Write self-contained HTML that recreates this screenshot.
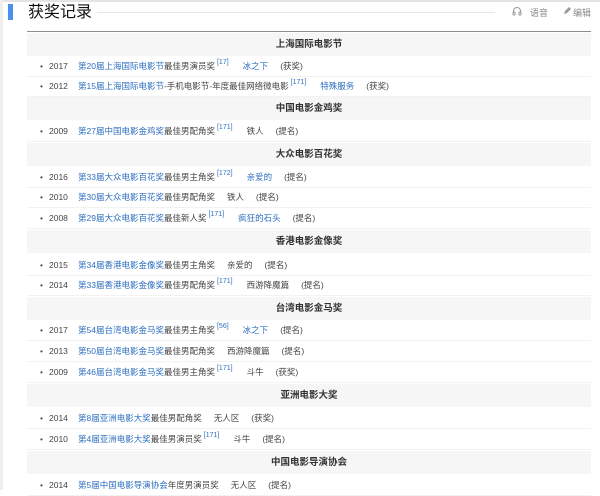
<!DOCTYPE html><html><head><meta charset="utf-8"><style>
body{margin:0;width:600px;height:490px;overflow:hidden;background:#fff;font-family:"Liberation Sans","Noto Sans CJK SC",sans-serif;color:#444;position:relative}
.lb{position:absolute;left:0;top:0;width:3px;height:490px;background:#eee}
.tb{position:absolute;left:0;top:0;width:600px;height:2px;background:#e4e4e4}
.blue{position:absolute;left:8px;top:4px;width:5px;height:16px;background:#4b8ff0}
h1{position:absolute;left:28px;top:1px;margin:0;font-size:16px;font-weight:normal;color:#111;line-height:24px}
.tl{position:absolute;left:97px;top:12px;width:398px;height:1px;background:#e8e8e8}
.tools{position:absolute;top:6px;font-size:9px;color:#888;white-space:nowrap}
.hl{position:absolute;left:27px;top:31px;width:564px;height:1px;background:#8a9095}
.h{position:absolute;left:27px;width:564px;height:23px;background:#f6f6f6;text-align:center;font-size:9.5px;font-weight:bold;color:#333;line-height:23px}
.r{position:absolute;left:27px;width:564px;height:20px;line-height:20px;font-size:8.5px;border-bottom:1px solid #f2f2f2;white-space:nowrap}
.r:before{content:"•";position:absolute;left:13px;top:0;color:#555}
.r span.y{position:absolute;left:22px;top:0}
.r span.t{position:absolute;left:51px;top:0}
a{color:#2d6fbf;text-decoration:none}
i{font-style:normal;display:inline-block;width:12px}
sup{font-size:7px;color:#2d6fbf;vertical-align:top;line-height:13px;margin:0 2px}
</style></head><body>
<div class="tb"></div><div class="lb"></div><div class="blue"></div>
<h1>获奖记录</h1><div class="tl"></div>
<svg style="position:absolute;left:512px;top:6px" width="10" height="10" viewBox="0 0 10 10" fill="none" stroke="#999" stroke-width="1"><path d="M1.5 7V5a3.5 3.5 0 0 1 7 0v2"/><rect x="1" y="6" width="2" height="3" rx=".5"/><rect x="7" y="6" width="2" height="3" rx=".5"/></svg>
<div class="tools" style="left:530px">语音</div>
<svg style="position:absolute;left:563px;top:6px" width="9" height="9" viewBox="0 0 9 9"><path d="M1 8l1-3 4-4 2 2-4 4z" fill="#999"/></svg>
<div class="tools" style="left:573px">编辑</div>
<div class="hl"></div>

<div class="h" style="top:33px">上海国际电影节</div>
<div class="r" style="top:56px"><span class="y">2017</span><span class="t"><a>第20届上海国际电影节</a>最佳男演员奖<sup>[17]</sup><i></i><a>冰之下</a><i></i>(获奖)</span></div>
<div class="r" style="top:76px"><span class="y">2012</span><span class="t"><a>第15届上海国际电影节</a>-手机电影节-年度最佳网络微电影<sup>[171]</sup><i></i><a>特殊服务</a><i></i>(获奖)</span></div>

<div class="h" style="top:97px">中国电影金鸡奖</div>
<div class="r" style="top:121px"><span class="y">2009</span><span class="t"><a>第27届中国电影金鸡奖</a>最佳男配角奖<sup>[171]</sup><i></i>铁人<i></i>(提名)</span></div>

<div class="h" style="top:143px">大众电影百花奖</div>
<div class="r" style="top:167px"><span class="y">2016</span><span class="t"><a>第33届大众电影百花奖</a>最佳男主角奖<sup>[172]</sup><i></i><a>亲爱的</a><i></i>(提名)</span></div>
<div class="r" style="top:187px"><span class="y">2010</span><span class="t"><a>第30届大众电影百花奖</a>最佳男配角奖<i></i>铁人<i></i>(提名)</span></div>
<div class="r" style="top:208px"><span class="y">2008</span><span class="t"><a>第29届大众电影百花奖</a>最佳新人奖<sup>[171]</sup><i></i><a>疯狂的石头</a><i></i>(提名)</span></div>

<div class="h" style="top:230px">香港电影金像奖</div>
<div class="r" style="top:255px"><span class="y">2015</span><span class="t"><a>第34届香港电影金像奖</a>最佳男主角奖<i></i>亲爱的<i></i>(提名)</span></div>
<div class="r" style="top:275px"><span class="y">2014</span><span class="t"><a>第33届香港电影金像奖</a>最佳男配角奖<sup>[171]</sup><i></i>西游降魔篇<i></i>(提名)</span></div>

<div class="h" style="top:297px">台湾电影金马奖</div>
<div class="r" style="top:320px"><span class="y">2017</span><span class="t"><a>第54届台湾电影金马奖</a>最佳男主角奖<sup>[56]</sup><i></i><a>冰之下</a><i></i>(提名)</span></div>
<div class="r" style="top:341px"><span class="y">2013</span><span class="t"><a>第50届台湾电影金马奖</a>最佳男配角奖<i></i>西游降魔篇<i></i>(提名)</span></div>
<div class="r" style="top:362px"><span class="y">2009</span><span class="t"><a>第46届台湾电影金马奖</a>最佳男主角奖<sup>[171]</sup><i></i>斗牛<i></i>(获奖)</span></div>

<div class="h" style="top:384px">亚洲电影大奖</div>
<div class="r" style="top:408px"><span class="y">2014</span><span class="t"><a>第8届亚洲电影大奖</a>最佳男配角奖<i></i>无人区<i></i>(获奖)</span></div>
<div class="r" style="top:429px"><span class="y">2010</span><span class="t"><a>第4届亚洲电影大奖</a>最佳男演员奖<sup>[171]</sup><i></i>斗牛<i></i>(提名)</span></div>

<div class="h" style="top:451px">中国电影导演协会</div>
<div class="r" style="top:475px"><span class="y">2014</span><span class="t"><a>第5届中国电影导演协会</a>年度男演员奖<i></i>无人区<i></i>(提名)</span></div>
</body></html>
